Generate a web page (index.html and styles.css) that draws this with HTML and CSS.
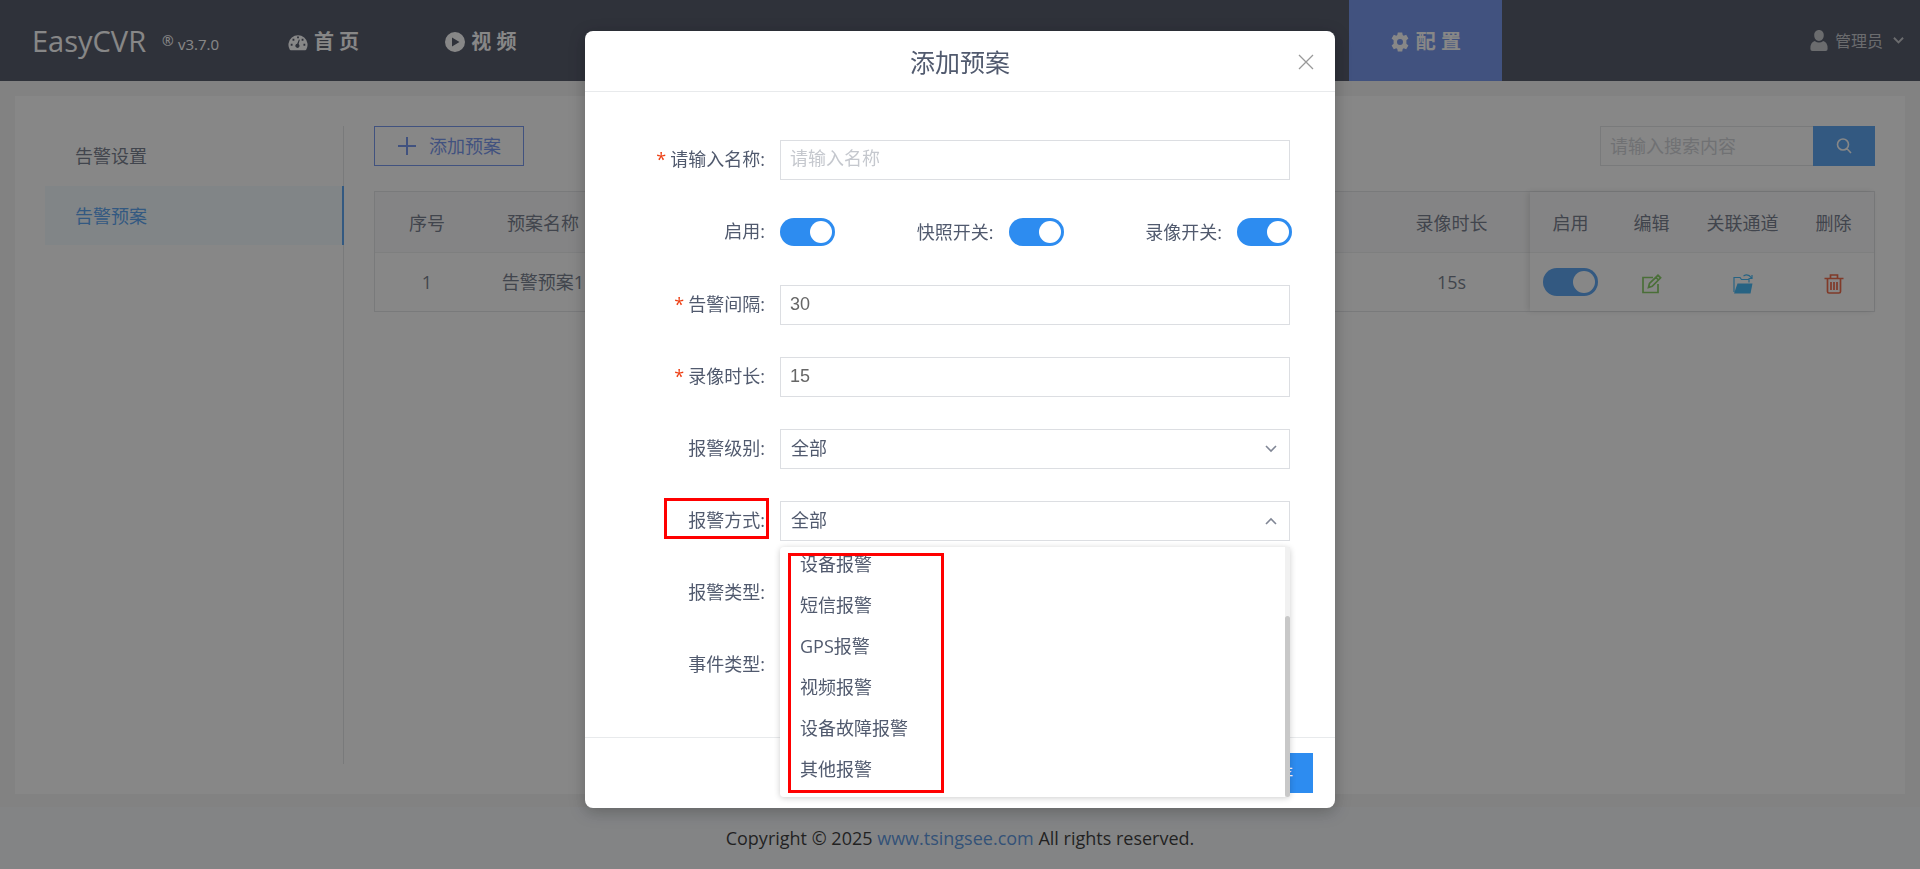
FILE: index.html
```html
<!DOCTYPE html>
<html lang="zh-CN">
<head>
<meta charset="utf-8">
<title>EasyCVR</title>
<link rel="stylesheet" href="styles.css">
</head>
<body>
<div class="page">
  <header class="topbar">
    <div class="brand">
      <span class="brand-name">EasyCVR</span>
      <span class="brand-mark">®</span>
      <span class="brand-version">v3.7.0</span>
    </div>
    <nav class="nav">
      <a class="nav-item" href="#home">
        <svg class="nav-icon" viewBox="0 0 22 20"><path fill="currentColor" fill-rule="evenodd" d="M2 18.500A10.500 10.500 0 1 1 20 18.500Q19.600 19 19 19H3Q2.400 19 2 18.500ZM10 4h2v2h-2ZM5 6.500h2v2H5ZM15 6.500h2v2h-2ZM3 12h2v2H3ZM17 12h2v2h-2ZM13 7.500l-1.300 4.800a2.300 2.300 0 1 1-1.600-.4L12 7.200Z"/></svg>
        <span>首 页</span>
      </a>
      <a class="nav-item" href="#video">
        <svg class="nav-icon" viewBox="0 0 20 20"><path fill="currentColor" fill-rule="evenodd" d="M10 0a10 10 0 1 1 0 20a10 10 0 0 1 0-20ZM7 5.500v9l7.500-4.500Z"/></svg>
        <span>视 频</span>
      </a>
      <a class="nav-item nav-item-active" href="#config">
        <svg class="nav-icon" viewBox="0 0 20 20"><path fill="currentColor" fill-rule="evenodd" d="M7.800 .5h4.400l.5 2.600 1 .6 2.500-.9 2.200 3.800-2 1.700v3.400l2 1.700-2.200 3.800-2.500-.9-1 .6-.5 2.600H7.800l-.5-2.600-1-.6-2.500.9-2.200-3.800 2-1.700V8.300l-2-1.700 2.200-3.800 2.500.9 1-.6ZM10 7a3 3 0 1 0 0 6a3 3 0 0 0 0-6Z"/></svg>
        <span>配 置</span>
      </a>
    </nav>
    <button class="user" type="button">
      <svg class="user-icon" viewBox="0 0 18 22"><path fill="currentColor" d="M9 0c3 0 5 2.200 5 5.500S12 11.500 9 11.500S4 8.800 4 5.500S6 0 9 0ZM4.500 11.500Q9 14.800 13.500 11.500Q18 13 18 19v1q0 2-2 2H2q-2 0-2-2v-1q0-6 4.500-7.500Z"/></svg>
      <span>管理员</span>
      <svg class="user-arrow" viewBox="0 0 12 12"><path fill="none" stroke="currentColor" stroke-width="2" d="M1 3l5 5 5-5"/></svg>
    </button>
  </header>

  <main class="card">
    <nav class="side">
      <a class="side-item" href="#settings">告警设置</a>
      <a class="side-item side-item-active" href="#plans">告警预案</a>
    </nav>
    <section class="content">
      <div class="toolbar">
        <button class="add-button" type="button">
          <svg class="add-icon" viewBox="0 0 20 20"><path stroke="currentColor" stroke-width="2" d="M10 1v18M1 10h18"/></svg>
          <span>添加预案</span>
        </button>
        <form class="search">
          <input class="search-input" type="text" placeholder="请输入搜索内容" aria-label="请输入搜索内容">
          <button class="search-button" type="button" aria-label="搜索">
            <svg class="search-icon" viewBox="0 0 16 16"><path fill="none" stroke="currentColor" stroke-width="1.600" d="M7 1a5.500 5.500 0 1 1 0 11a5.500 5.500 0 0 1 0-11ZM10.800 10.500l4.200 4.500"/></svg>
          </button>
        </form>
      </div>
      <div class="table-wrap">
        <table class="table table-main">
          <thead><tr><th class="col-index">序号</th><th class="col-name">预案名称</th><th></th><th class="col-duration">录像时长</th></tr></thead>
          <tbody><tr><td>1</td><td>告警预案1</td><td></td><td>15s</td></tr></tbody>
        </table>
        <table class="table table-fixed">
          <thead><tr><th class="col-action">启用</th><th class="col-action">编辑</th><th class="col-channel">关联通道</th><th class="col-action">删除</th></tr></thead>
          <tbody><tr>
            <td><input class="switch" type="checkbox" checked aria-label="启用"></td>
            <td><button class="icon-button edit" type="button" aria-label="编辑"><svg class="row-icon" viewBox="0 0 20 20"><path fill="none" stroke="currentColor" stroke-width="1.700" d="M11 3.500H1v15h15V10M6.500 13.500l1-4L16 1.300l2.600 2.500-8.400 8.500ZM14 3.500l2.500 2.500"/></svg></button></td>
            <td><button class="icon-button link" type="button" aria-label="关联通道"><svg class="row-icon" viewBox="0 0 20 20"><path fill="currentColor" d="M4.500 9.500H19.500L17.500 19.500H1Z"/><path fill="none" stroke="currentColor" stroke-width="1.200" d="M1 18V3.500h6l1.500 2H16V8.500M10.500 2q4.500-3 8 2M19 1v3.500h-3.500"/></svg></button></td>
            <td><button class="icon-button remove" type="button" aria-label="删除"><svg class="row-icon" viewBox="0 0 20 20"><path fill="none" stroke="currentColor" stroke-width="1.700" d="M.5 4.500h19M6.500 4V1h7v3M3.500 5v12.500q0 1.500 1.500 1.500h10q1.500 0 1.500-1.500V5M7 8v8M10 8v8M13 8v8"/></svg></button></td>
          </tr></tbody>
        </table>
      </div>
    </section>
  </main>

  <footer class="footer">
    <p>Copyright © 2025 <a href="#site">www.tsingsee.com</a> All rights reserved.</p>
  </footer>
</div>

<div class="mask">
  <div class="modal" role="dialog" aria-labelledby="modal-title">
    <div class="modal-head">
      <h2 class="modal-title" id="modal-title">添加预案</h2>
      <button class="modal-close" type="button" aria-label="关闭"><svg viewBox="0 0 16 16"><path stroke="currentColor" stroke-width="1.300" d="M1 1l14 14M15 1L1 15"/></svg></button>
    </div>
    <form class="form">
      <div class="row">
        <label class="label required" for="name">请输入名称:</label>
        <input class="field" id="name" type="text" placeholder="请输入名称">
      </div>
      <div class="row row-switches">
        <label class="label" for="enable">启用:</label>
        <div class="switches">
          <input class="switch" id="enable" type="checkbox" checked>
          <span class="switch-pair"><label for="snapshot">快照开关:</label><input class="switch" id="snapshot" type="checkbox" checked></span>
          <span class="switch-pair"><label for="record">录像开关:</label><input class="switch" id="record" type="checkbox" checked></span>
        </div>
      </div>
      <div class="row">
        <label class="label required" for="interval">告警间隔:</label>
        <input class="field" id="interval" type="text" value="30">
      </div>
      <div class="row">
        <label class="label required" for="duration">录像时长:</label>
        <input class="field" id="duration" type="text" value="15">
      </div>
      <div class="row">
        <label class="label" for="level">报警级别:</label>
        <div class="select-box">
          <select class="field select" id="level"><option>全部</option></select>
          <svg class="select-arrow" viewBox="0 0 12 12"><path fill="none" stroke="currentColor" stroke-width="1.600" d="M1 3l5 5 5-5"/></svg>
        </div>
      </div>
      <div class="row">
        <label class="label" for="method">报警方式:</label>
        <span class="mark mark-label"></span>
        <div class="select-box">
          <select class="field select" id="method"><option>全部</option></select>
          <svg class="select-arrow" viewBox="0 0 12 12"><path fill="none" stroke="currentColor" stroke-width="1.600" d="M1 9l5-5 5 5"/></svg>
          <div class="dropdown">
            <ul class="options">
              <li class="option">设备报警</li>
              <li class="option">短信报警</li>
              <li class="option">GPS报警</li>
              <li class="option">视频报警</li>
              <li class="option">设备故障报警</li>
              <li class="option">其他报警</li>
            </ul>
            <div class="scroll-track"><div class="scroll-thumb"></div></div>
            <span class="mark mark-options"></span>
          </div>
        </div>
      </div>
      <div class="row"><span class="label">报警类型:</span></div>
      <div class="row"><span class="label">事件类型:</span></div>
    </form>
    <div class="modal-foot">
      <button class="save-button" type="button">保存</button>
    </div>
  </div>
</div>
</body>
</html>
```

FILE: styles.css
```css
* {
  box-sizing: border-box;
}

body {
  margin: 0;
  background: #f2f2f2;
  color: #515a6e;
  font: 18px/26px "Open Sans", "Noto Sans CJK SC", sans-serif;
}

a {
  color: inherit;
  text-decoration: none;
}

button,
input,
select {
  margin: 0;
  font: inherit;
  color: inherit;
}

svg {
  display: block;
}

.page {
  display: flex;
  flex-direction: column;
  min-height: 100vh;
}

/* Top bar */
.topbar {
  display: flex;
  align-items: center;
  height: 81px;
  padding: 0 16px 0 32px;
  background: #242b40;
  color: #fff;
}

.brand {
  display: flex;
  align-items: center;
  flex: 0 0 215px;
}

.brand-name {
  flex: 0 0 130px;
  font-size: 29px;
  line-height: 40px;
}

.brand-mark {
  flex: 0 0 16px;
  font-size: 14px;
}

.brand-version {
  padding-top: 6px;
  font-size: 15px;
}

.nav {
  display: grid;
  grid-template-columns: repeat(8, 153px);
  justify-content: space-between;
  flex: 0 1 1255px;
  align-self: stretch;
}

.nav-item {
  display: flex;
  align-items: center;
  justify-content: center;
  gap: 6px;
  padding-top: 2px;
  font-size: 20px;
  font-weight: 700;
}

.nav-item-active {
  grid-column: 8;
  background: #527aeb;
}

.nav-icon {
  width: 20px;
  height: 20px;
}

.user {
  display: flex;
  align-items: center;
  gap: 7px;
  margin-left: auto;
  padding: 0;
  border: 0;
  background: none;
  color: #b8bbc0;
  font-size: 16px;
}

.user-icon {
  width: 18px;
  height: 21px;
}

.user-arrow {
  width: 11px;
  height: 11px;
  margin-left: 3px;
}

/* Content card */
.card {
  display: flex;
  flex: 1;
  margin: 15px 15px 13px;
  padding: 30px;
  background: #fff;
}

.side {
  flex: 0 0 299px;
  border-right: 1px solid #dcdee2;
}

.side-item {
  display: flex;
  align-items: center;
  height: 60px;
  padding-left: 30px;
}

.side-item-active {
  height: 59px;
  margin-right: -1px;
  border-right: 2px solid #2d8cf0;
  background: #f0faff;
  color: #2d8cf0;
}

.content {
  flex: 1;
  padding-left: 30px;
}

.toolbar {
  display: flex;
  justify-content: space-between;
  margin-bottom: 25px;
}

.add-button {
  display: flex;
  align-items: center;
  justify-content: center;
  gap: 12px;
  width: 150px;
  height: 40px;
  border: 1px solid #527aeb;
  background: #fff;
  color: #527aeb;
}

.add-icon {
  width: 20px;
  height: 20px;
}

.search {
  display: flex;
}

.search-input {
  width: 213px;
  height: 40px;
  padding: 0 9px;
  border: 1px solid #dcdee2;
  border-right: 0;
  background: #fff;
}

.search-input::placeholder,
.field::placeholder {
  color: #c5c8ce;
  opacity: 1;
}

.search-button {
  display: flex;
  align-items: center;
  justify-content: center;
  width: 62px;
  height: 40px;
  border: 0;
  background: #2d8cf0;
  color: #fff;
}

.search-icon {
  width: 16px;
  height: 16px;
}

.table-wrap {
  display: flex;
  border: 1px solid #dcdee2;
}

.table {
  border-collapse: collapse;
  table-layout: fixed;
}

.table-main {
  flex: 1;
}

.table-fixed {
  width: 343px;
  box-shadow: -2px 0 6px rgba(0, 0, 0, 0.15);
}

.table th,
.table td {
  height: 59px;
  padding: 0;
  font-weight: 400;
  text-align: center;
  vertical-align: middle;
}

.table th {
  height: 60px;
  padding-top: 2px;
  background: #f8f8f9;
  border-bottom: 1px solid #e8eaec;
}

.col-index {
  width: 104px;
}

.col-name {
  width: 128px;
}

.col-duration {
  width: 157px;
}

.col-action {
  width: 81px;
}

.col-channel {
  width: 101px;
}

.icon-button {
  padding: 0;
  border: 0;
  background: none;
  vertical-align: middle;
}

.row-icon {
  width: 20px;
  height: 20px;
}

.edit {
  color: #67c23a;
}

.link {
  color: #10a6f5;
}

.remove {
  color: #ed3f14;
}

.switch {
  position: relative;
  width: 55px;
  height: 28px;
  border-radius: 14px;
  background: #2d8cf0;
  appearance: none;
  vertical-align: middle;
}

.switch::after {
  content: "";
  position: absolute;
  top: 3px;
  right: 3px;
  width: 22px;
  height: 22px;
  border-radius: 50%;
  background: #fff;
}

.footer {
  display: flex;
  align-items: center;
  justify-content: center;
  height: 62px;
  background: #f5f8fb;
  color: #000;
}

.footer p {
  margin: 0;
}

.footer a {
  color: #2d7ad8;
}

/* Dialog */
.mask {
  position: fixed;
  inset: 0;
  display: flex;
  align-items: flex-start;
  justify-content: center;
  padding-top: 31px;
  background: rgba(55, 55, 55, 0.6);
}

.modal {
  width: 750px;
  border-radius: 8px;
  background: #fff;
  box-shadow: 0 4px 16px rgba(0, 0, 0, 0.25);
}

.modal-head {
  display: grid;
  grid-template-columns: 1fr auto 1fr;
  align-items: center;
  height: 61px;
  padding: 2px 21px 0;
  border-bottom: 1px solid #e8eaec;
}

.modal-title {
  grid-column: 2;
  margin: 0;
  font-size: 25px;
  font-weight: 400;
  line-height: 36px;
}

.modal-close {
  justify-self: end;
  width: 16px;
  height: 16px;
  padding: 0;
  border: 0;
  background: none;
  color: #999;
}

.form {
  display: flex;
  flex-direction: column;
  gap: 32px;
  padding: 48px 45px 52px 59px;
}

.row {
  position: relative;
  display: flex;
  height: 40px;
}

.row-switches {
  height: 41px;
}

.label {
  flex: 0 0 136px;
  padding-right: 15px;
  line-height: 38px;
  text-align: right;
  white-space: nowrap;
}

.required::before {
  content: "*";
  margin-right: 4px;
  color: #ed3f14;
}

.field {
  flex: 1;
  width: 100%;
  height: 40px;
  padding: 0 9px 2px;
  border: 1px solid #dcdee2;
  border-radius: 0;
  background: #fff;
  color: #666;
  font-family: "Liberation Sans", "Noto Sans CJK SC", sans-serif;
}

.select-box {
  position: relative;
  flex: 1;
}

.select {
  padding: 0 10px;
  color: #515a6e;
  appearance: none;
}

.select-arrow {
  position: absolute;
  top: 14px;
  right: 13px;
  width: 12px;
  height: 12px;
  color: #808695;
}

.switches {
  display: flex;
  align-items: center;
  justify-content: space-between;
  flex: 1;
  height: 39px;
  margin-right: -2px;
}

.switch-pair {
  display: flex;
  align-items: center;
  gap: 15px;
}

.dropdown {
  position: absolute;
  z-index: 1;
  top: 46px;
  left: 0;
  right: 0;
  display: flex;
  height: 250px;
  border-radius: 4px;
  background: #fff;
  box-shadow: 0 1px 6px rgba(0, 0, 0, 0.2);
}

.options {
  display: flex;
  flex: 1;
  flex-direction: column;
  justify-content: flex-end;
  margin: 0;
  padding: 0 0 7px;
  overflow: hidden;
  list-style: none;
}

.option {
  flex: none;
  padding: 0 20px;
  line-height: 41px;
}

.scroll-track {
  display: flex;
  align-items: flex-end;
  width: 5px;
  background: #f1f1f1;
}

.scroll-thumb {
  width: 5px;
  height: 181px;
  border-radius: 3px;
  background: #c8c8c8;
}

.mark {
  position: absolute;
  border: 3px solid #f00;
  pointer-events: none;
}

.mark-label {
  top: -3px;
  left: 20px;
  width: 105px;
  height: 41px;
}

.mark-options {
  top: 6px;
  left: 8px;
  width: 156px;
  height: 240px;
}

.modal-foot {
  display: flex;
  justify-content: flex-end;
  padding: 15px 22px;
  border-top: 1px solid #e8eaec;
}

.save-button {
  height: 40px;
  padding: 0 20px;
  border: 0;
  background: #2d8cf0;
  color: #fff;
  font-size: 16px;
}
```
